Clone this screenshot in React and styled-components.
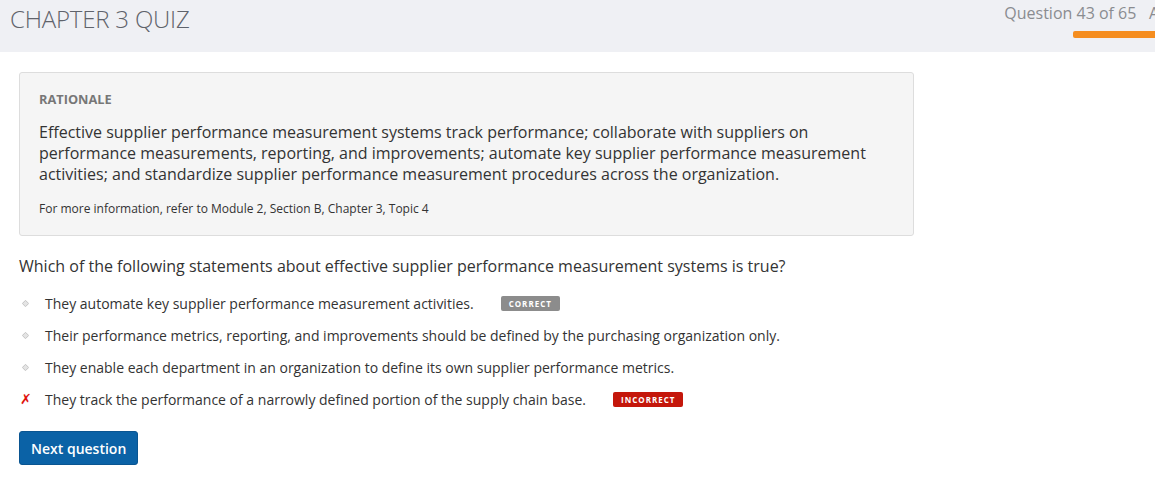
import React from "react";
import styled, { createGlobalStyle } from "styled-components";

const GlobalStyle = createGlobalStyle`
  body {
    margin: 0;
    font-family: "Open Sans", "Liberation Sans", sans-serif;
    background: #ffffff;
    color: #333333;
  }
`;

const Header = styled.header`
  display: flex;
  justify-content: space-between;
  align-items: flex-start;
  height: 52px;
  background: #eff0f4;
  overflow: hidden;
`;

const Title = styled.h1`
  margin: 4px 0 0 10px;
  font-size: 24px;
  font-weight: 300;
  line-height: 30px;
  color: #5f636b;
  letter-spacing: -0.2px;
`;

const Progress = styled.div`
  display: flex;
  flex-direction: column;
  align-items: flex-end;
  padding-top: 2px;
`;

const Counter = styled.div`
  font-size: 16px;
  font-weight: 400;
  line-height: 22px;
  color: #8a8c90;
  white-space: nowrap;
  margin-right: -4px;
`;

const Bar = styled.div`
  width: 84px;
  height: 7px;
  margin-top: 7px;
  margin-right: -2px;
  background: #f58d1f;
  border-radius: 2px;
`;

const Main = styled.main`
  padding: 20px 19px;
`;

const Card = styled.section`
  width: 855px;
  padding: 18px 19px 18px 19px;
  background: #f5f5f5;
  border: 1px solid #dddddd;
  border-radius: 3px;
`;

const CardLabel = styled.div`
  font-size: 12.8px;
  font-weight: 700;
  color: #777777;
  line-height: 16px;
  margin-bottom: 15px;
`;

const Rationale = styled.p`
  margin: 0;
  font-size: 16px;
  line-height: 21px;
  color: #333333;
`;

const Reference = styled.p`
  margin: 16px 0 0 0;
  font-size: 12px;
  line-height: 16px;
  color: #333333;
`;

const Question = styled.p`
  margin: 19px 0 16px 0;
  font-size: 16px;
  line-height: 22px;
  color: #333333;
`;

const Options = styled.ul`
  list-style: none;
  margin: 0;
  padding: 0;
  display: flex;
  flex-direction: column;
  gap: 12px;
`;

const Option = styled.li`
  display: flex;
  align-items: center;
  height: 20px;
  font-size: 14px;
  color: #333333;
`;

const Marker = styled.span`
  width: 26px;
  flex-shrink: 0;
  display: flex;
  align-items: center;
  padding-left: ${({ wrong }) => (wrong ? "1px" : "3px")};
  box-sizing: border-box;
  color: #e0120c;
  font-size: 14px;
  font-weight: 700;
  font-family: "DejaVu Sans", sans-serif;
`;

const Badge = styled.span`
  display: inline-block;
  margin-left: 27px;
  padding: 0 8px;
  height: 15px;
  line-height: 15px;
  font-size: 8px;
  font-weight: 700;
  letter-spacing: 1px;
  color: #ffffff;
  border-radius: 2px;
  background: ${({ tone }) => (tone === "bad" ? "#c4170b" : "#8c8c8c")};
`;

const NextButton = styled.button`
  margin-top: 22px;
  height: 34px;
  padding: 0 11px;
  background: #0b62a6;
  border: 1px solid #0a5591;
  border-radius: 3px;
  color: #ffffff;
  font-family: "Open Sans", "Liberation Sans", sans-serif;
  font-size: 14px;
  font-weight: 600;
  cursor: pointer;
`;

const Diamond = () => (
  <svg width="7" height="7" viewBox="0 0 7 7">
    <path d="M3.5 0.3 L6.7 3.5 L3.5 6.7 L0.3 3.5 Z" fill="#e4e4e4" stroke="#c4c4c4" strokeWidth="1" />
  </svg>
);

const options = [
  { text: "They automate key supplier performance measurement activities.", badge: "CORRECT" },
  { text: "Their performance metrics, reporting, and improvements should be defined by the purchasing organization only." },
  { text: "They enable each department in an organization to define its own supplier performance metrics." },
  { text: "They track the performance of a narrowly defined portion of the supply chain base.", badge: "INCORRECT", wrong: true },
];

export default function App() {
  return (
    <>
      <GlobalStyle />
      <Header>
        <Title>CHAPTER 3 QUIZ</Title>
        <Progress>
          <Counter>Question 43 of 65 &nbsp;&nbsp;A</Counter>
          <Bar />
        </Progress>
      </Header>
      <Main>
        <Card>
          <CardLabel>RATIONALE</CardLabel>
          <Rationale>
            Effective supplier performance measurement systems track performance; collaborate with suppliers on
            performance measurements, reporting, and improvements; automate key supplier performance measurement
            activities; and standardize supplier performance measurement procedures across the organization.
          </Rationale>
          <Reference>For more information, refer to Module 2, Section B, Chapter 3, Topic 4</Reference>
        </Card>
        <Question>
          Which of the following statements about effective supplier performance measurement systems is true?
        </Question>
        <Options>
          {options.map((o) => (
            <Option key={o.text}>
              <Marker wrong={o.wrong}>{o.wrong ? "✗" : <Diamond />}</Marker>
              {o.text}
              {o.badge && <Badge tone={o.wrong ? "bad" : "ok"}>{o.badge}</Badge>}
            </Option>
          ))}
        </Options>
        <NextButton>Next question</NextButton>
      </Main>
    </>
  );
}
